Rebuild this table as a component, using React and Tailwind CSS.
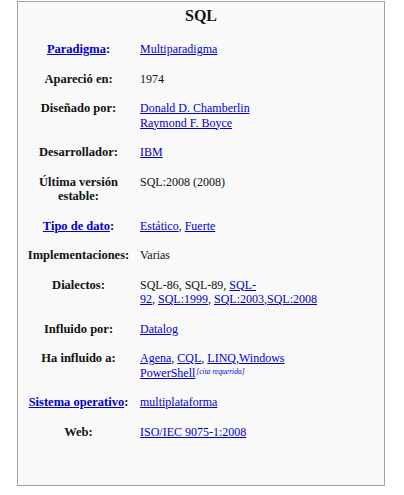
import React from 'react';

const A = ({ children }) => (
    <a href="#" className="text-[#0000cc] underline underline-offset-1">{children}</a>
);

const rows = [
    { label: <><A>Paradigma</A>:</>, value: <A>Multiparadigma</A> },
    { label: 'Apareció en:', value: '1974' },
    { label: 'Diseñado por:', value: <><A>Donald D. Chamberlin</A><br /><A>Raymond F. Boyce</A></> },
    { label: 'Desarrollador:', value: <A>IBM</A> },
    { label: <>Última versión<br />estable:</>, value: 'SQL:2008 (2008)' },
    { label: <><A>Tipo de dato</A>:</>, value: <><A>Estático</A>, <A>Fuerte</A></> },
    { label: 'Implementaciones:', value: 'Varias' },
    {
        label: 'Dialectos:',
        value: <>SQL-86, SQL-89, <A>SQL-<br />92</A>, <A>SQL:1999</A>, <A>SQL:2003</A>,<A>SQL:2008</A></>,
    },
    { label: 'Influido por:', value: <A>Datalog</A> },
    {
        label: 'Ha influido a:',
        value: (
            <>
                <A>Agena</A>, <A>CQL</A>, <A>LINQ</A>,<A>Windows<br />PowerShell</A>
                <sup className="text-[7.5px] italic text-[#0000cc] relative -top-[3px] ml-[1px]">[cita requerida]</sup>
            </>
        ),
    },
    { label: <><A>Sistema operativo</A>:</>, value: <A>multiplataforma</A> },
    { label: 'Web:', value: <A>ISO/IEC 9075-1:2008</A> },
];

export default function App() {
    return (
        <div className="w-[404px] h-[495px] bg-white pt-[1px] pl-[17px]" style={{ fontFamily: '"Liberation Serif", "Times New Roman", serif' }}>
            <div className="w-[368px] h-[485px] border border-[#a2a2a2] bg-[#f9f9f9] text-[12px] leading-[14.5px] text-[#111]">
                <div className="text-center font-bold text-[16px] leading-[20px] pt-[4px] mb-[8.5px]">SQL</div>
                <div className="flex flex-col">
                    {rows.map((r, i) => (
                        <div key={i} className="grid grid-cols-[121px_1fr] py-[7.5px]">
                            <div className="text-center font-bold text-[12.5px]">{r.label}</div>
                            <div className="pl-[1px]">{r.value}</div>
                        </div>
                    ))}
                </div>
            </div>
        </div>
    );
}
